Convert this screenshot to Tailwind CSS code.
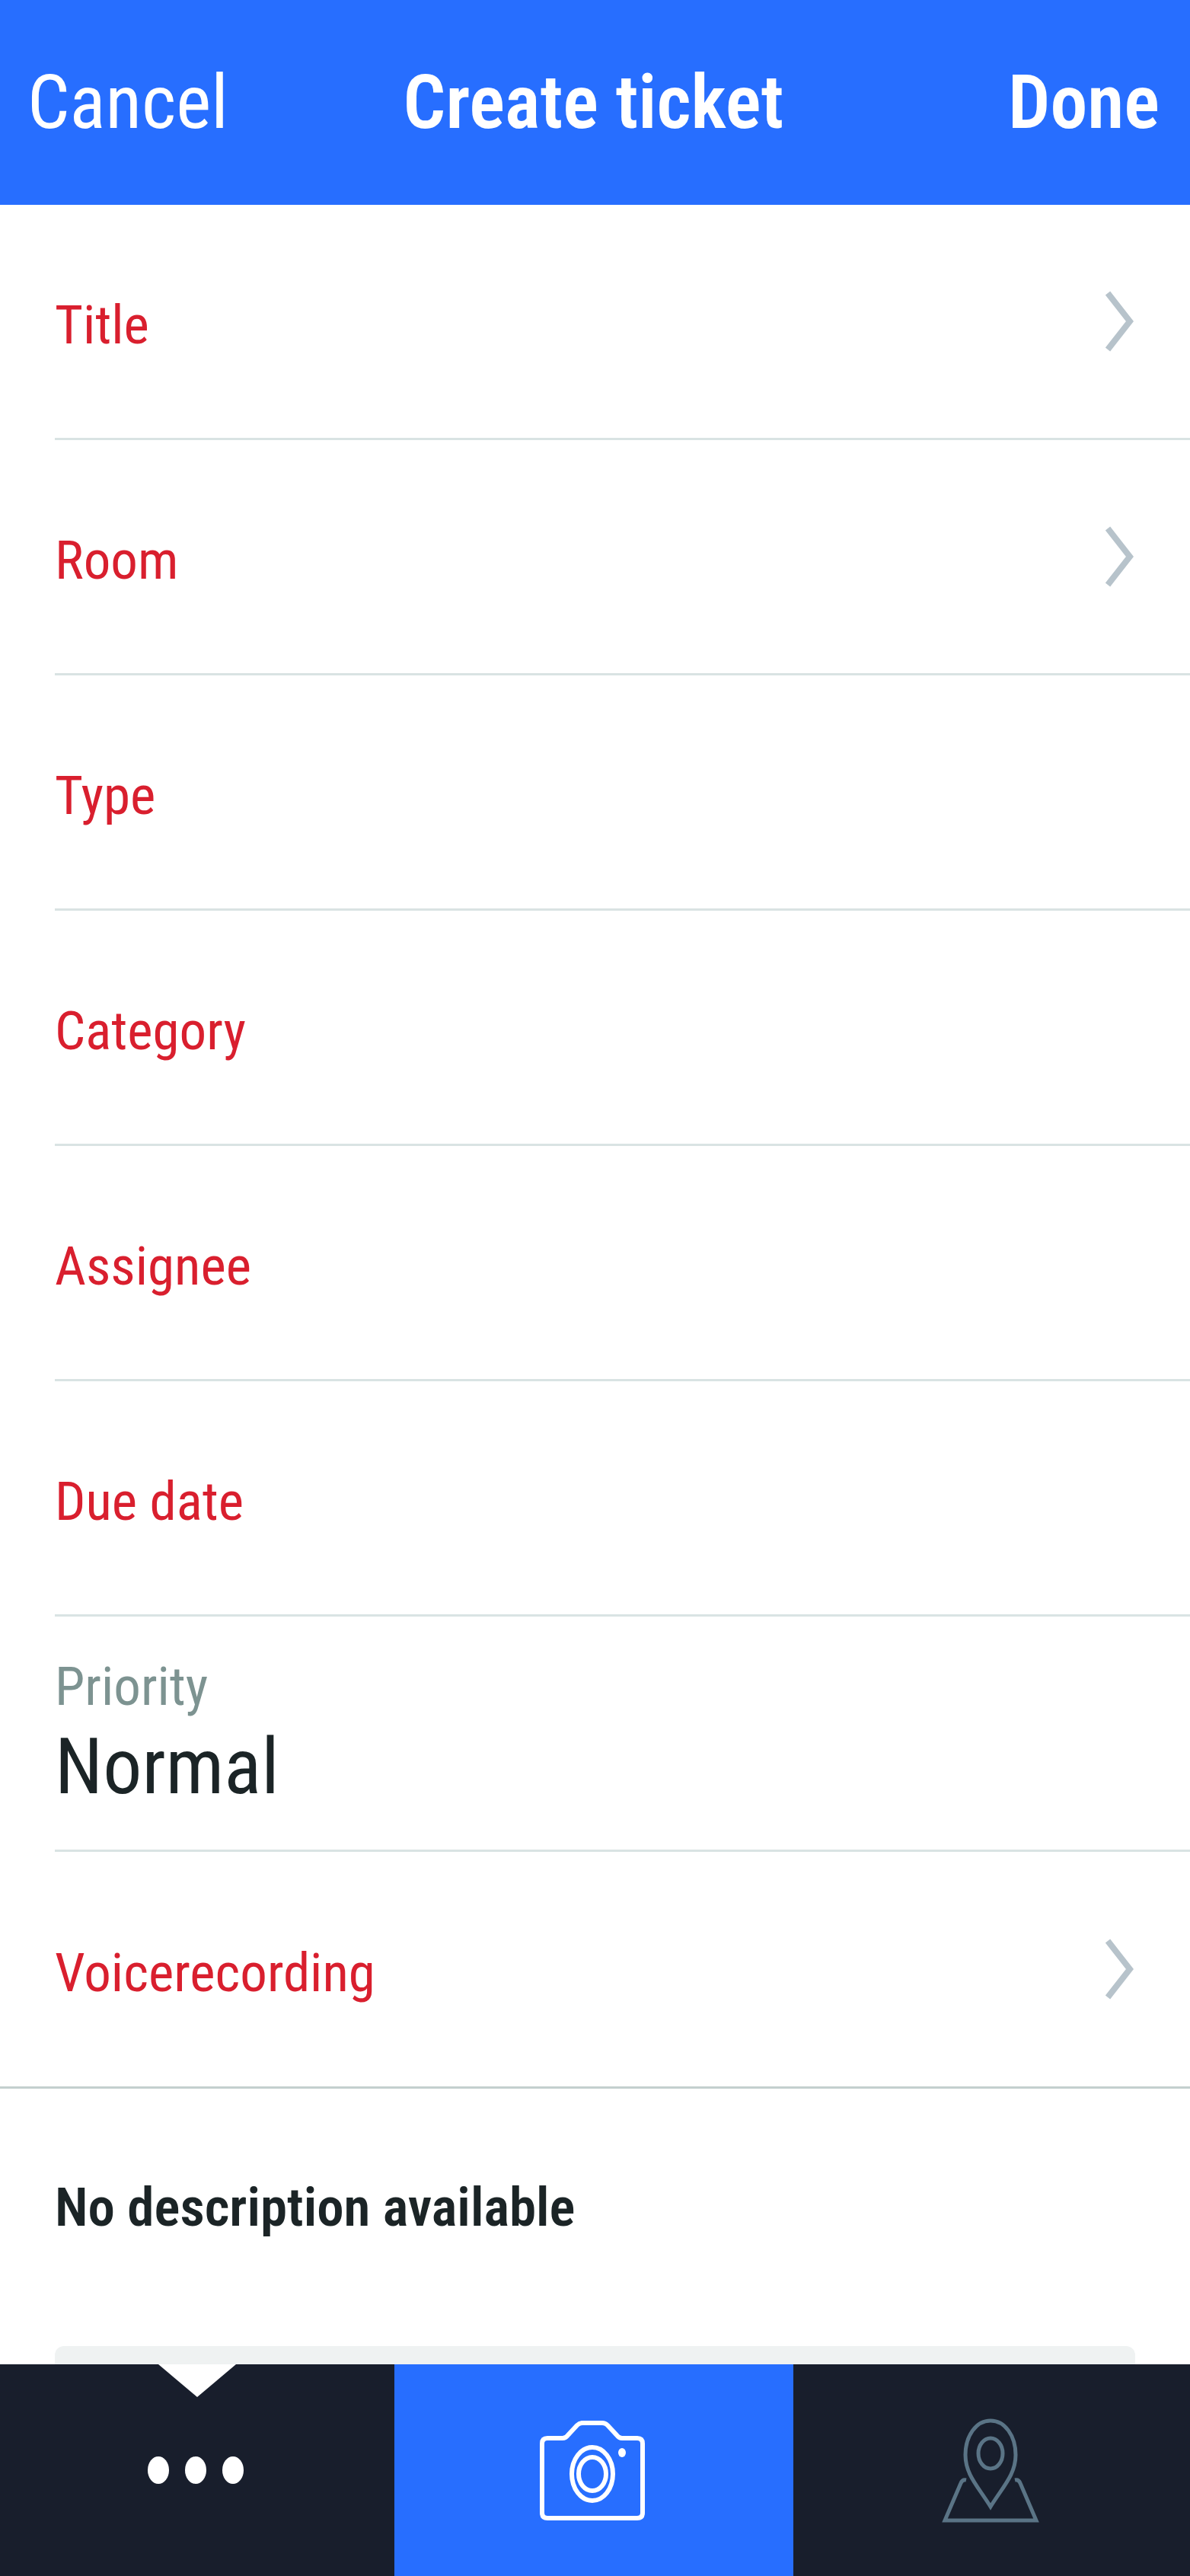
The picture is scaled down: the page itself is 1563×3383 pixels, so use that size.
<!DOCTYPE html>
<html lang="en">
<head>
<meta charset="utf-8">
<meta name="viewport" content="width=device-width, initial-scale=1">
<title>Create ticket</title>
<script src="https://cdn.jsdelivr.net/npm/@tailwindcss/browser@4"></script>
</head>
<body class="flex min-h-screen flex-col bg-white font-['Roboto_Condensed',Roboto,sans-serif] text-[#1b2426]">
  <header class="grid h-[269px] shrink-0 grid-cols-[1fr_auto_1fr] items-center bg-[#276eff] pr-10 pl-9 text-[98px] leading-none text-white">
    <button type="button" class="justify-self-start">Cancel</button>
    <h1 class="font-semibold">Create ticket</h1>
    <button type="button" class="justify-self-end font-semibold">Done</button>
  </header>

  <main class="flex grow flex-col">
    <div class="flex flex-col border-b-3 border-[#c3cfce] pl-[72px] text-[71px] leading-none text-[#d91f2e]">
      <button type="button" class="flex h-[309px] items-center justify-between border-b-3 border-[#d9e3e3] pr-[74px] text-left">
        <span class="pt-2">Title</span>
        <svg class="h-[80px] w-[38px]" viewBox="0 0 38 80" fill="none" stroke="#b7c3cb" stroke-width="8" aria-hidden="true"><path d="M4 3 33 40 4 77"/></svg>
      </button>
      <button type="button" class="flex h-[309px] items-center justify-between border-b-3 border-[#d9e3e3] pr-[74px] text-left">
        <span class="pt-2">Room</span>
        <svg class="h-[80px] w-[38px]" viewBox="0 0 38 80" fill="none" stroke="#b7c3cb" stroke-width="8" aria-hidden="true"><path d="M4 3 33 40 4 77"/></svg>
      </button>
      <button type="button" class="flex h-[309px] items-center border-b-3 border-[#d9e3e3] text-left"><span class="pt-2">Type</span></button>
      <button type="button" class="flex h-[309px] items-center border-b-3 border-[#d9e3e3] text-left"><span class="pt-2">Category</span></button>
      <button type="button" class="flex h-[309px] items-center border-b-3 border-[#d9e3e3] text-left"><span class="pt-2">Assignee</span></button>
      <button type="button" class="flex h-[309px] items-center border-b-3 border-[#d9e3e3] text-left"><span class="pt-2">Due date</span></button>
      <button type="button" class="flex h-[309px] flex-col items-start justify-center gap-2 border-b-3 border-[#d9e3e3] pt-2 text-left">
        <span class="text-[#7d9391]">Priority</span>
        <span class="text-[102px] leading-[124px] text-[#1b2426]">Normal</span>
      </button>
      <button type="button" class="flex h-[308px] items-center justify-between pr-[74px] text-left">
        <span class="pt-2">Voicerecording</span>
        <svg class="h-[80px] w-[38px]" viewBox="0 0 38 80" fill="none" stroke="#b7c3cb" stroke-width="8" aria-hidden="true"><path d="M4 3 33 40 4 77"/></svg>
      </button>
    </div>
    <section class="flex grow flex-col px-[72px]">
      <p class="flex h-[309px] grow items-center pb-7 text-[71px] leading-none font-semibold">No description available</p>
      <div class="h-6 rounded-t-xl bg-[#eff2f2]"></div>
    </section>
  </main>

  <nav class="grid h-[278px] shrink-0 grid-cols-[518fr_524fr_521fr] bg-[#181e2c]" aria-label="Ticket sections">
    <button type="button" class="relative flex items-center justify-center pr-1" aria-label="More">
      <svg class="absolute top-0 left-1/2 h-[43px] w-[102px] -translate-x-1/2" viewBox="0 0 102 43" fill="#fff" aria-hidden="true"><path d="M0 0H102L51 43Z"/></svg>
      <svg class="h-[38px] w-[128px]" viewBox="0 0 128 38" fill="#fff" aria-hidden="true"><ellipse cx="15" cy="19" rx="14" ry="18"/><ellipse cx="64" cy="19" rx="14" ry="18"/><ellipse cx="113" cy="19" rx="14" ry="18"/></svg>
    </button>
    <button type="button" class="flex items-center justify-center bg-[#276eff] pr-1" aria-label="Camera">
      <svg class="h-[131px] w-[138px]" viewBox="0 0 138 131" fill="none" stroke="#fff" stroke-width="6" aria-hidden="true"><path d="M10 23H30Q34 23 37 19L49 6Q52 3 56 3H82Q86 3 89 6L101 19Q104 23 108 23H128Q135 23 135 30V121Q135 128 128 128H10Q3 128 3 121V30Q3 23 10 23Z"/><ellipse cx="69" cy="70" rx="27" ry="35"/><ellipse cx="69" cy="70" rx="18" ry="22"/><ellipse cx="108" cy="42" rx="5" ry="6" fill="#fff" stroke="none"/></svg>
    </button>
    <button type="button" class="flex items-center justify-center pr-1" aria-label="Location">
      <svg class="h-[137px] w-[128px]" viewBox="0 0 128 137" fill="none" stroke="#5a7486" stroke-width="5" aria-hidden="true"><path d="M64 3C45 3 31 23 31 48C31 74 48 90 64 116C80 90 97 74 97 48C97 23 83 3 64 3Z"/><ellipse cx="64" cy="46" rx="16" ry="20"/><path d="M32 81Q27 80 25 85L4 134H124L103 85Q101 80 96 81"/></svg>
    </button>
  </nav>
</body>
</html>
